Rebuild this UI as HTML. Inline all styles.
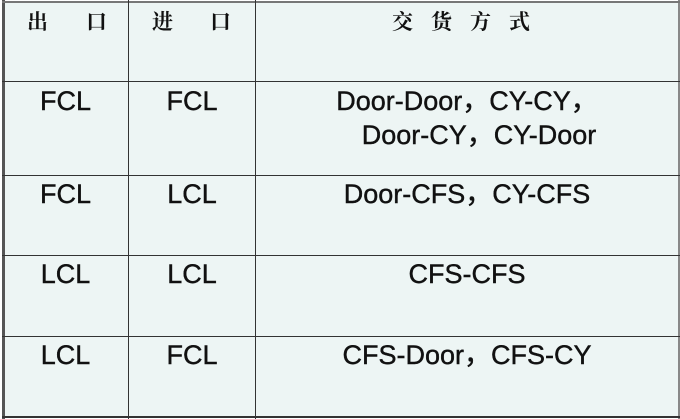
<!DOCTYPE html>
<html><head><meta charset="utf-8"><style>
body{margin:0;width:680px;height:419px;background:#fff;overflow:hidden;font-family:"Liberation Sans","Noto Sans CJK SC",sans-serif;}
.c{position:absolute;background:#edf5f4;}
.h{position:absolute;background:#333;}
.t{position:absolute;font-size:27px;color:#111;text-align:center;line-height:34px;white-space:nowrap;-webkit-text-stroke:0.4px #111;}
.k{position:absolute;font-size:21px;font-weight:bold;color:#111;font-family:"Noto Serif CJK SC","Noto Sans CJK SC",serif;white-space:pre;line-height:24px;}
</style></head><body>
<div class="c" style="left:3px;top:2px;width:676px;height:415px"></div>
<div class="h" style="left:2px;top:0;width:3px;height:419px;background:#555"></div>
<div class="h" style="left:678px;top:0;width:2px;height:419px;background:#888"></div>
<div class="h" style="left:2px;top:1px;width:678px;height:2px;background:#777"></div>
<div class="h" style="left:2px;top:81px;width:678px;height:1px"></div>
<div class="h" style="left:2px;top:175px;width:678px;height:1px"></div>
<div class="h" style="left:2px;top:255px;width:678px;height:1px"></div>
<div class="h" style="left:2px;top:336px;width:678px;height:1px"></div>
<div class="h" style="left:2px;top:416px;width:678px;height:2px"></div>
<div class="h" style="left:128px;top:0;width:1px;height:419px"></div>
<div class="h" style="left:255px;top:0;width:1px;height:419px"></div>
<div class="k" style="left:27px;top:9px">出</div><div class="k" style="left:86px;top:9px">口</div>
<div class="k" style="left:152px;top:9px">进</div><div class="k" style="left:210px;top:9px">口</div>
<div class="k" style="left:392px;top:9px;letter-spacing:18px">交货方式</div>
<div class="t" style="left:3px;width:125px;top:84px">FCL</div>
<div class="t" style="left:129px;width:126px;top:84px">FCL</div>
<div class="t" style="left:256px;width:422px;top:84px">Door-Door，CY-CY，</div>
<div class="t" style="left:268px;width:422px;top:118px">Door-CY，CY-Door</div>
<div class="t" style="left:3px;width:125px;top:177px">FCL</div>
<div class="t" style="left:129px;width:126px;top:177px">LCL</div>
<div class="t" style="left:256px;width:422px;top:177px">Door-CFS，CY-CFS</div>
<div class="t" style="left:3px;width:125px;top:257px">LCL</div>
<div class="t" style="left:129px;width:126px;top:257px">LCL</div>
<div class="t" style="left:256px;width:422px;top:257px">CFS-CFS</div>
<div class="t" style="left:3px;width:125px;top:338px">LCL</div>
<div class="t" style="left:129px;width:126px;top:338px">FCL</div>
<div class="t" style="left:256px;width:422px;top:338px">CFS-Door，CFS-CY</div>
</body></html>
